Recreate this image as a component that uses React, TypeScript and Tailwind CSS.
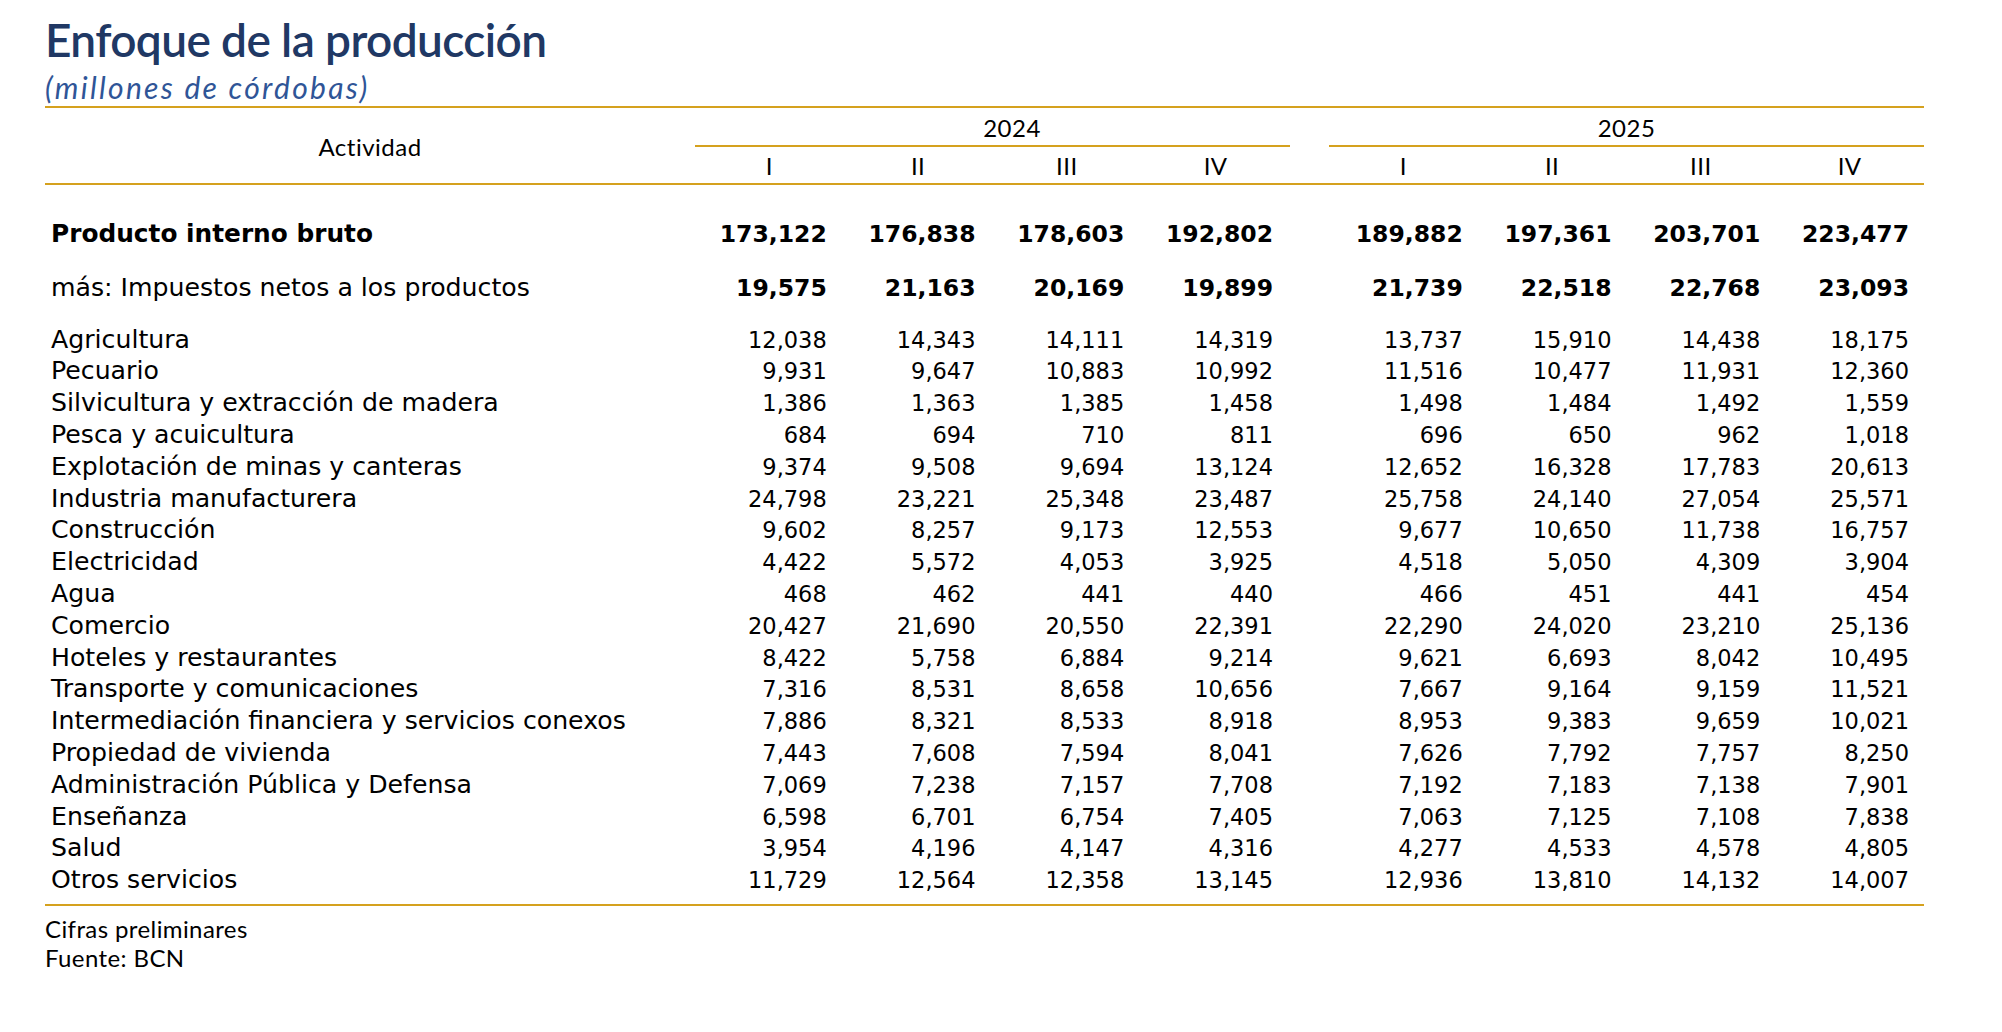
import React from "react";

type Row = {
  label: string;
  values: string[];
};

const pib: Row = {
  label: "Producto interno bruto",
  values: ["173,122", "176,838", "178,603", "192,802", "189,882", "197,361", "203,701", "223,477"],
};

const impuestos: Row = {
  label: "más: Impuestos netos a los productos",
  values: ["19,575", "21,163", "20,169", "19,899", "21,739", "22,518", "22,768", "23,093"],
};

const actividades: Row[] = [
  { label: "Agricultura", values: ["12,038", "14,343", "14,111", "14,319", "13,737", "15,910", "14,438", "18,175"] },
  { label: "Pecuario", values: ["9,931", "9,647", "10,883", "10,992", "11,516", "10,477", "11,931", "12,360"] },
  { label: "Silvicultura y extracción de madera", values: ["1,386", "1,363", "1,385", "1,458", "1,498", "1,484", "1,492", "1,559"] },
  { label: "Pesca y acuicultura", values: ["684", "694", "710", "811", "696", "650", "962", "1,018"] },
  { label: "Explotación de minas y canteras", values: ["9,374", "9,508", "9,694", "13,124", "12,652", "16,328", "17,783", "20,613"] },
  { label: "Industria manufacturera", values: ["24,798", "23,221", "25,348", "23,487", "25,758", "24,140", "27,054", "25,571"] },
  { label: "Construcción", values: ["9,602", "8,257", "9,173", "12,553", "9,677", "10,650", "11,738", "16,757"] },
  { label: "Electricidad", values: ["4,422", "5,572", "4,053", "3,925", "4,518", "5,050", "4,309", "3,904"] },
  { label: "Agua", values: ["468", "462", "441", "440", "466", "451", "441", "454"] },
  { label: "Comercio", values: ["20,427", "21,690", "20,550", "22,391", "22,290", "24,020", "23,210", "25,136"] },
  { label: "Hoteles y restaurantes", values: ["8,422", "5,758", "6,884", "9,214", "9,621", "6,693", "8,042", "10,495"] },
  { label: "Transporte y comunicaciones", values: ["7,316", "8,531", "8,658", "10,656", "7,667", "9,164", "9,159", "11,521"] },
  { label: "Intermediación financiera y servicios conexos", values: ["7,886", "8,321", "8,533", "8,918", "8,953", "9,383", "9,659", "10,021"] },
  { label: "Propiedad de vivienda", values: ["7,443", "7,608", "7,594", "8,041", "7,626", "7,792", "7,757", "8,250"] },
  { label: "Administración Pública y Defensa", values: ["7,069", "7,238", "7,157", "7,708", "7,192", "7,183", "7,138", "7,901"] },
  { label: "Enseñanza", values: ["6,598", "6,701", "6,754", "7,405", "7,063", "7,125", "7,108", "7,838"] },
  { label: "Salud", values: ["3,954", "4,196", "4,147", "4,316", "4,277", "4,533", "4,578", "4,805"] },
  { label: "Otros servicios", values: ["11,729", "12,564", "12,358", "13,145", "12,936", "13,810", "14,132", "14,007"] },
];

const quarters = ["I", "II", "III", "IV"];

const gridCols = "grid grid-cols-[650px_repeat(4,148.75px)_39px_repeat(4,148.75px)]";

function DataRow({
  row,
  boldLabel,
  boldValues,
  className,
}: {
  row: Row;
  boldLabel?: boolean;
  boldValues?: boolean;
  className?: string;
}) {
  const labelCls = boldLabel ? "font-bold text-[24.8px]" : "font-normal text-[25.2px]";
  const valueCls = boldValues ? "font-bold text-[23.5px]" : "font-normal text-[22.5px]";
  return (
    <div className={`${gridCols} h-[31.8px] leading-[31.8px] items-baseline ${className ?? ""}`}>
      <div className={`pl-[6px] whitespace-nowrap ${labelCls}`}>{row.label}</div>
      {row.values.slice(0, 4).map((v, i) => (
        <div key={i} className={`text-right pr-[17px] ${valueCls}`}>
          {v}
        </div>
      ))}
      <div />
      {row.values.slice(4).map((v, i) => (
        <div key={i} className={`text-right pr-[15px] ${valueCls}`}>
          {v}
        </div>
      ))}
    </div>
  );
}

export default function App() {
  return (
    <div className="min-h-screen w-[2002px] bg-white text-black">
      <div className="pl-[45px] pt-[14px]">
        {/* Title */}
        <h1 className="font-['Lato',sans-serif] font-semibold text-[46px] leading-[52px] text-[#203864] tracking-[-0.6px]">
          Enfoque de la producción
        </h1>
        <p className="font-['Lato',sans-serif] italic text-[30px] leading-[34px] text-[#2f5597] tracking-[2.3px] mt-[4px]">
          (millones de córdobas)
        </p>

        {/* Table */}
        <div className="w-[1879px] mt-[2px] border-t-2 border-[#d5a11e]">
          {/* Header */}
          <div className={`${gridCols} font-['Lato',sans-serif] text-[24px] tracking-[0.5px] border-b-2 border-[#d5a11e]`}>
            <div className="row-span-2 flex items-center justify-center pt-[2px]">Actividad</div>
            <div className="col-span-4 h-[39px] pl-[39px] text-center leading-[40px] border-b-2 border-[#d5a11e]">
              2024
            </div>
            <div />
            <div className="col-span-4 h-[39px] text-center leading-[40px] border-b-2 border-[#d5a11e]">
              2025
            </div>
            {quarters.map((q) => (
              <div key={"a" + q} className="h-[36px] leading-[38px] text-center">
                {q}
              </div>
            ))}
            <div />
            {quarters.map((q) => (
              <div key={"b" + q} className="h-[36px] leading-[38px] text-center">
                {q}
              </div>
            ))}
          </div>

          {/* Body */}
          <div className="font-['DejaVu_Sans',sans-serif] pt-[33px] pb-[8px] border-b-2 border-[#d5a11e]">
            <DataRow row={pib} boldLabel boldValues />
            <DataRow row={impuestos} boldValues className="mt-[22px]" />
            <div className="mt-[20px]">
              {actividades.map((r) => (
                <DataRow key={r.label} row={r} />
              ))}
            </div>
          </div>
        </div>

        {/* Notes */}
        <div className="font-['Lato',sans-serif] text-[24px] tracking-[0.4px] leading-[29.5px] pt-[8px]">
          <div>Cifras preliminares</div>
          <div>Fuente: BCN</div>
        </div>
      </div>
    </div>
  );
}
